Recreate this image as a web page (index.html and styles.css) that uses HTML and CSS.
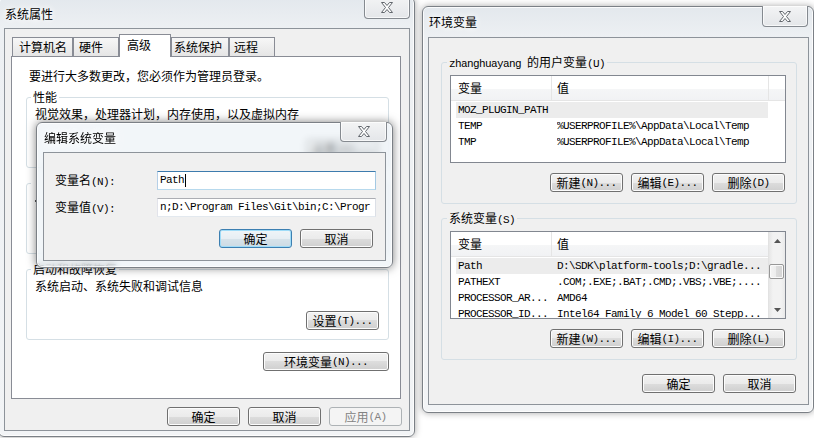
FILE: index.html
```html
<!DOCTYPE html>
<html lang="zh-CN">
<head>
<meta charset="utf-8">
<title>系统属性</title>
<link rel="stylesheet" href="styles.css">
</head>
<body>

<div class="win sys">
  <div class="titlebar">
    <span class="title">系统属性</span>
    <span class="close"><svg width="14" height="11" viewBox="0 0 14 11"><path d="M1.5 .5h3l2.5 3 2.5-3h3l-4 5 4 5h-3l-2.5-3-2.5 3h-3l4-5z" fill="#fff" stroke="#62676d"/></svg></span>
  </div>
  <div class="client">
    <div class="tabs">
      <div class="tab t1">计算机名</div>
      <div class="tab t2">硬件</div>
      <div class="tab sel t3">高级</div>
      <div class="tab t4">系统保护</div>
      <div class="tab t5">远程</div>
    </div>
    <div class="panel">
      <div class="intro">要进行大多数更改，您必须作为管理员登录。</div>
      <div class="group sg first">
        <div class="legend">性能</div>
        <div class="gtext">视觉效果，处理器计划，内存使用，以及虚拟内存</div>
        <div class="gbtns"><div class="btn">设置<span class="m">(S)...</span></div></div>
      </div>
      <div class="group sg">
        <div class="legend blank"></div>
        <div class="gtext blank"><span class="dot"></span></div>
        <div class="gbtns"><div class="btn blankbtn"></div></div>
      </div>
      <div class="group sg">
        <div class="legend">启动和故障恢复</div>
        <div class="gtext">系统启动、系统失败和调试信息</div>
        <div class="gbtns"><div class="btn">设置<span class="m">(T)...</span></div></div>
      </div>
      <div class="envrow"><div class="btn wide">环境变量<span class="m">(N)...</span></div></div>
    </div>
    <div class="footer">
      <div class="btn">确定</div>
      <div class="btn">取消</div>
      <div class="btn dis">应用<span class="m">(A)</span></div>
    </div>
  </div>
</div>

<div class="win edit">
  <div class="titlebar">
    <span class="title">编辑系统变量</span>
    <span class="close"><svg width="14" height="11" viewBox="0 0 14 11"><path d="M1.5 .5h3l2.5 3 2.5-3h3l-4 5 4 5h-3l-2.5-3-2.5 3h-3l4-5z" fill="#fff" stroke="#62676d"/></svg></span>
  </div>
  <div class="client eclient">
    <div class="frow first">
      <span class="flabel">变量名<span class="m">(N):</span></span>
      <div class="input focus"><span class="m">Path</span><span class="caret"></span></div>
    </div>
    <div class="frow">
      <span class="flabel">变量值<span class="m">(V):</span></span>
      <div class="input"><span class="m">n;D:\Program Files\Git\bin;C:\Progr</span></div>
    </div>
    <div class="ebtns">
      <div class="btn def">确定</div>
      <div class="btn">取消</div>
    </div>
  </div>
</div>

<div class="win env">
  <div class="titlebar">
    <span class="title">环境变量</span>
    <span class="close"><svg width="14" height="11" viewBox="0 0 14 11"><path d="M1.5 .5h3l2.5 3 2.5-3h3l-4 5 4 5h-3l-2.5-3-2.5 3h-3l4-5z" fill="#fff" stroke="#62676d"/></svg></span>
  </div>
  <div class="client">
    <div class="group eg first">
      <div class="legend"><span class="m">zhanghuayang </span>的用户变量<span class="m">(U)</span></div>
      <div class="list">
        <div class="lmain">
          <div class="lhead"><div class="hc c1">变量</div><div class="hc c2">值</div><div class="hc c3"></div></div>
          <div class="rows">
            <div class="row sel"><span class="c1 m">MOZ_PLUGIN_PATH</span><span class="c2 m"></span></div>
            <div class="row"><span class="c1 m">TEMP</span><span class="c2 m">%USERPROFILE%\AppData\Local\Temp</span></div>
            <div class="row"><span class="c1 m">TMP</span><span class="c2 m">%USERPROFILE%\AppData\Local\Temp</span></div>
          </div>
        </div>
      </div>
      <div class="gbtns3">
        <div class="btn">新建<span class="m">(N)...</span></div>
        <div class="btn">编辑<span class="m">(E)...</span></div>
        <div class="btn">删除<span class="m">(D)</span></div>
      </div>
    </div>
    <div class="group eg">
      <div class="legend">系统变量<span class="m">(S)</span></div>
      <div class="list">
        <div class="lmain">
          <div class="lhead"><div class="hc c1">变量</div><div class="hc c2">值</div></div>
          <div class="rows">
            <div class="row sel"><span class="c1 m">Path</span><span class="c2 m">D:\SDK\platform-tools;D:\gradle...</span></div>
            <div class="row"><span class="c1 m">PATHEXT</span><span class="c2 m">.COM;.EXE;.BAT;.CMD;.VBS;.VBE;....</span></div>
            <div class="row"><span class="c1 m">PROCESSOR_AR...</span><span class="c2 m">AMD64</span></div>
            <div class="row"><span class="c1 m">PROCESSOR_ID...</span><span class="c2 m">Intel64 Family 6 Model 60 Stepp...</span></div>
          </div>
        </div>
        <div class="sb">
          <div class="sbbtn"><svg width="7" height="4" viewBox="0 0 7 4"><path d="M3.5 0L7 4H0z" fill="#555"/></svg></div>
          <div class="sbtrack"><div class="thumb"></div></div>
          <div class="sbbtn"><svg width="7" height="4" viewBox="0 0 7 4"><path d="M0 0h7L3.5 4z" fill="#555"/></svg></div>
        </div>
      </div>
      <div class="gbtns3">
        <div class="btn">新建<span class="m">(W)...</span></div>
        <div class="btn">编辑<span class="m">(I)...</span></div>
        <div class="btn">删除<span class="m">(L)</span></div>
      </div>
    </div>
    <div class="footer efoot">
      <div class="btn">确定</div>
      <div class="btn">取消</div>
    </div>
  </div>
</div>

</body>
</html>
```

FILE: styles.css
```css
* { box-sizing: border-box; }
html, body { margin: 0; padding: 0; }
body {
  position: relative;
  width: 814px;
  height: 438px;
  overflow: hidden;
  background: #fff;
  font-family: "Noto Sans CJK SC", "Liberation Sans", sans-serif;
  font-size: 12px;
  line-height: 16px;
  color: #000;
}
.m {
  font-family: "Liberation Mono", "Noto Sans CJK SC", monospace;
  font-size: 11px;
  letter-spacing: -0.6px;
}

/* window frames */
.win {
  position: absolute;
  display: flex;
  flex-direction: column;
  border: 1px solid #7b8086;
  border-radius: 6px;
  background: linear-gradient(180deg, #e3e8ed 0, #edf0f3 30px, #f2f4f6 100%);
  box-shadow: 0 0 7px rgba(0, 0, 0, .35), inset 0 0 0 1px rgba(255, 255, 255, .8);
}
.sys { left: -2px; top: -3px; width: 417px; height: 440px; padding: 0 4px 5px 5px; }
.env { left: 422px; top: 6px; width: 392px; height: 407px; padding: 0 4px 7px 5px; }
.edit {
  left: 36px; top: 122px; width: 357px; height: 146px;
  padding: 0 6px 6px 6px;
  z-index: 5;
  background: rgba(232, 238, 244, .55);
  -webkit-backdrop-filter: blur(3px);
  backdrop-filter: blur(3px);
  box-shadow: 0 0 10px rgba(0, 0, 0, .5), inset 0 0 0 1px rgba(255, 255, 255, .8);
}

.titlebar {
  flex: none;
  display: flex;
  justify-content: space-between;
  align-items: flex-start;
}
.sys .titlebar, .env .titlebar { height: 30px; }
.edit .titlebar { height: 29px; }
.title {
  padding-left: 1px;
  margin-top: 8px;
  line-height: 16px;
  text-shadow: 0 0 6px #fff, 0 0 10px #fff;
}
.edit .title, .env .title { margin-top: 7px; }

.close {
  width: 46px;
  height: 22px;
  margin-top: -1px;
  border: 1px solid #858a90;
  border-top: none;
  border-radius: 0 0 4px 4px;
  background: linear-gradient(180deg, #f3f4f5, #e4e6e9);
  box-shadow: inset 0 0 0 1px rgba(255, 255, 255, .7);
  display: flex;
  align-items: center;
  justify-content: center;
}
.env .close { height: 21px; margin-right: 1px; }
.edit .close { width: 47px; height: 20px; margin-right: -1px; }

.client {
  flex: 1;
  display: flex;
  flex-direction: column;
  background: #f0f0f0;
  border: 1px solid #8d939a;
}

/* tabs */
.tabs {
  flex: none;
  display: flex;
  align-items: flex-end;
  height: 27px;
  padding-left: 7px;
}
.tab {
  height: 19px;
  border: 1px solid #898c95;
  border-bottom: none;
  background: linear-gradient(180deg, #f7f7f7, #e5e5e5);
  line-height: 17px;
  white-space: nowrap;
}
.tab.sel {
  height: 23px;
  margin-bottom: -1px;
  position: relative;
  z-index: 1;
  background: #fff;
  line-height: 20px;
}
.t1 { width: 61px; padding-left: 6px; }
.t2 { width: 46px; padding-left: 5px; }
.t3 { width: 52px; padding-left: 7px; }
.t4 { width: 58px; padding-left: 2px; }
.t5 { width: 46px; padding-left: 4px; }

.panel {
  flex: none;
  margin-left: 6px;
  width: 390px;
  height: 343px;
  border: 1px solid #898c95;
  background: #fff;
  display: flex;
  flex-direction: column;
}
.intro { margin: 11px 0 0 17px; }

/* group boxes */
.group {
  flex: none;
  border: 1px solid #d5dfe5;
  border-radius: 3px;
}
.legend {
  width: max-content;
  margin: -8px 0 0 5px;
  padding: 0 2px;
  line-height: 14px;
  height: 14px;
  background: #f0f0f0;
  white-space: nowrap;
}
.sg { margin: 15px 11px 0 14px; height: 71px; }
.sg.first { margin-top: 13px; }
.sg .legend { margin-left: 4px; background: #fff; }
.sg .legend.blank { width: 76px; }
.gtext { margin: 2px 0 0 8px; }
.gtext.blank { height: 16px; }
.dot { display: inline-block; width: 2px; height: 2px; margin-top: 8px; background: #555; vertical-align: top; }
.blankbtn { visibility: hidden; }
.gbtns { display: flex; justify-content: flex-end; margin: 17px 9px 0 0; }
.envrow { display: flex; justify-content: flex-end; margin: 12px 11px 0 0; }

.footer {
  flex: none;
  display: flex;
  justify-content: flex-end;
  gap: 8px;
  margin: 8px 7px 0 0;
}
.efoot { margin: 14px 12px 0 0; }

/* buttons */
.btn {
  flex: none;
  width: 73px;
  height: 19px;
  border: 1px solid #707070;
  border-radius: 3px;
  background: linear-gradient(180deg, #f2f2f2 0, #ebebeb 50%, #dddddd 50%, #cfcfcf 100%);
  box-shadow: inset 0 0 0 1px #fcfcfc;
  display: flex;
  align-items: center;
  justify-content: center;
  line-height: 16px;
  white-space: nowrap;
}
.btn.wide { width: 126px; }
.btn.dis {
  border-color: #adb2b5;
  background: #f4f4f4;
  color: #838383;
  box-shadow: none;
}
.btn.def {
  border-color: #3c7fb1;
  background: linear-gradient(180deg, #eff5f8 0, #e7eef3 50%, #d7e3ea 50%, #cddbe4 100%);
  box-shadow: inset 0 0 0 1px #9fdcf8;
}

/* edit dialog */
.frow {
  display: flex;
  align-items: center;
  height: 19px;
  margin: 8px 0 0 11px;
}
.frow.first { margin-top: 18px; }
.flabel { width: 102px; flex: none; white-space: nowrap; }
.input {
  width: 219px;
  height: 19px;
  border: 1px solid;
  border-color: #abadb3 #dbdfe6 #e3e9ef #e2e3ea;
  background: #fff;
  padding-left: 2px;
  line-height: 17px;
  overflow: hidden;
  white-space: nowrap;
  display: flex;
  align-items: center;
}
.input.focus { border-color: #3d7bad #a4c9e3 #b7d9ed #b5cfe7; }
.caret { display: inline-block; width: 1px; height: 13px; background: #000; margin-left: 1px; }
.ebtns {
  display: flex;
  justify-content: flex-end;
  gap: 8px;
  margin: 12px 12px 0 0;
}

/* environment window */
.eg { margin: 14px 11px 0 12px; height: 142px; }
.eg.first { margin-top: 24px; }
.list {
  margin: 6px 0 0 8px;
  width: 336px;
  height: 88px;
  border: 1px solid #828790;
  background: #fff;
  display: flex;
  overflow: hidden;
}
.lmain { flex: 1; min-width: 0; display: flex; flex-direction: column; overflow: hidden; }
.lhead {
  flex: none;
  display: flex;
  height: 25px;
  border-bottom: 1px solid #e5e5e5;
  background: linear-gradient(180deg, #fff 0, #fff 55%, #f5f6f7 55%, #f1f2f4 100%);
}
.hc { flex: none; line-height: 24px; border-right: 1px solid #e5e5e5; white-space: nowrap; }
.hc.c1 { width: 101px; padding-left: 7px; }
.hc.c2 { width: 217px; padding-left: 5px; }
.hc.c3 { flex: 1; border-right: none; }
.rows { padding: 1px 0 0 5px; }
.row { display: flex; width: 312px; height: 16px; line-height: 16px; white-space: nowrap; }
.row.sel { background: #ececec; }
.row .c1 { flex: none; width: 101px; padding-left: 2px; }
.row .c2 { flex: 1; overflow: hidden; }

.sb {
  flex: none;
  width: 17px;
  display: flex;
  flex-direction: column;
  border-left: 1px solid #e2e2e2;
  background: linear-gradient(90deg, #e6e6e6, #f2f2f2 25%, #f2f2f2 75%, #e9e9e9);
}
.sbbtn { flex: none; height: 17px; display: flex; align-items: center; justify-content: center; }
.sbtrack { flex: 1; }
.thumb {
  margin: 15px 1px 0 0;
  height: 15px;
  border: 1px solid #979797;
  border-radius: 2px;
  background: linear-gradient(90deg, #f4f4f4, #ececec 50%, #dcdcdc 50%, #d4d4d4);
  box-shadow: inset 0 0 0 1px #fafafa;
}
.gbtns3 {
  display: flex;
  justify-content: flex-end;
  gap: 8px;
  margin: 10px 11px 0 0;
}
```
